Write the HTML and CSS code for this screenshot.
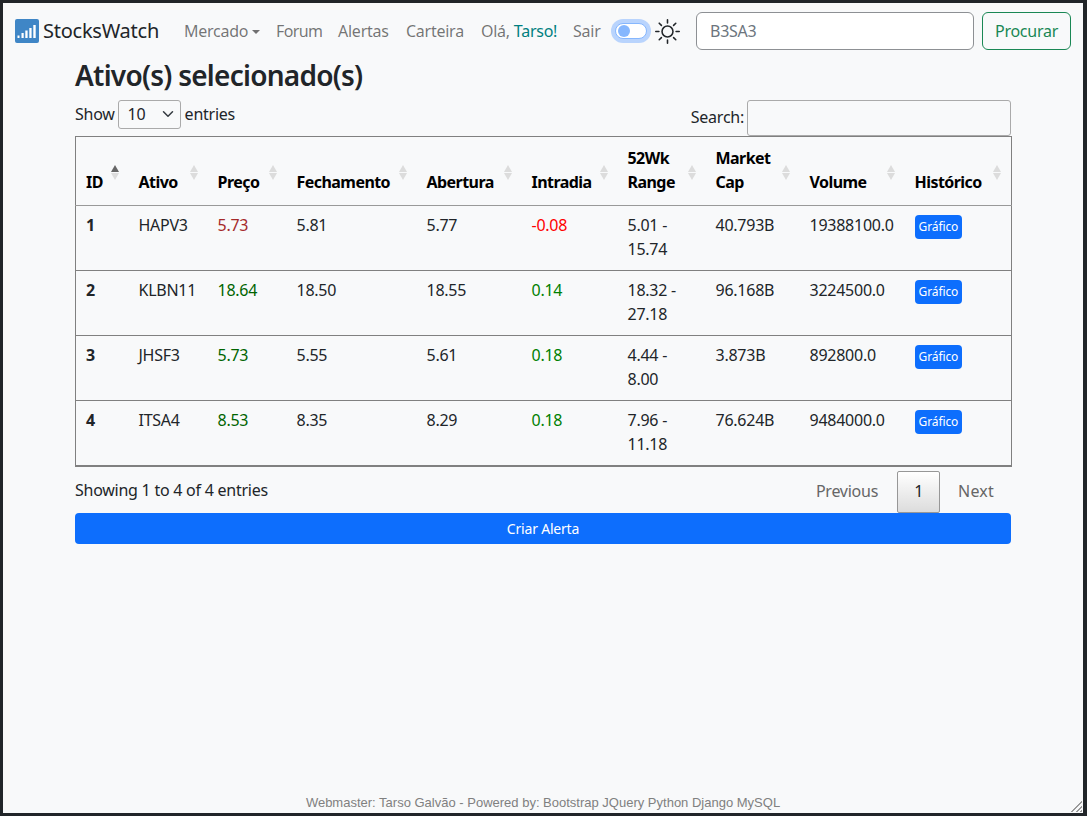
FILE: index.html
```html
<!DOCTYPE html>
<html lang="pt-BR">
<head>
<meta charset="utf-8">
<title>StocksWatch</title>
<link rel="stylesheet" href="styles.css">
</head>
<body>
<div class="frame">
  <nav class="navbar">
    <a class="brand" href="#">
      <svg class="logo" viewBox="0 0 24 24" width="24" height="24"><rect width="24" height="24" rx="2" fill="#3f86c6"/><g fill="#fff"><rect x="2.5" y="16.5" width="2" height="2.5"/><rect x="6.5" y="14" width="2.2" height="5"/><rect x="10.3" y="11.5" width="2.3" height="7.5"/><rect x="14.3" y="9" width="2.3" height="10"/><rect x="18.3" y="6" width="2.4" height="13"/></g></svg>
      <span>StocksWatch</span>
    </a>
    <ul class="nav">
      <li class="nav-link nav-mercado">Mercado<i class="caret"></i></li>
      <li class="nav-link nav-forum">Forum</li>
      <li class="nav-link nav-alertas">Alertas</li>
      <li class="nav-link nav-carteira">Carteira</li>
      <li class="nav-link nav-ola">Olá, <span class="user">Tarso!</span></li>
      <li class="nav-link nav-sair">Sair</li>
    </ul>
    <span class="switch"><i class="knob"></i></span>
    <svg class="sun" viewBox="0 0 16 16" width="25" height="25" fill="#212529"><path d="M8 11a3 3 0 1 1 0-6 3 3 0 0 1 0 6m0 1a4 4 0 1 0 0-8 4 4 0 0 0 0 8M8 0a.5.5 0 0 1 .5.5v2a.5.5 0 0 1-1 0v-2A.5.5 0 0 1 8 0m0 13a.5.5 0 0 1 .5.5v2a.5.5 0 0 1-1 0v-2A.5.5 0 0 1 8 13m8-5a.5.5 0 0 1-.5.5h-2a.5.5 0 0 1 0-1h2a.5.5 0 0 1 .5.5M3 8a.5.5 0 0 1-.5.5h-2a.5.5 0 0 1 0-1h2A.5.5 0 0 1 3 8m10.657-5.657a.5.5 0 0 1 0 .707l-1.414 1.415a.5.5 0 1 1-.707-.708l1.414-1.414a.5.5 0 0 1 .707 0m-9.193 9.193a.5.5 0 0 1 0 .707L3.05 13.657a.5.5 0 0 1-.707-.707l1.414-1.414a.5.5 0 0 1 .707 0m9.193 2.121a.5.5 0 0 1-.707 0l-1.414-1.414a.5.5 0 0 1 .707-.707l1.414 1.414a.5.5 0 0 1 0 .707M4.464 4.465a.5.5 0 0 1-.707 0L2.343 3.05a.5.5 0 1 1 .707-.707l1.414 1.414a.5.5 0 0 1 0 .708"/></svg>
    <form class="search-form">
      <input class="search-input" type="text" placeholder="B3SA3">
      <button class="search-btn" type="button">Procurar</button>
    </form>
  </nav>
  <main class="container">
    <h3 class="title">Ativo(s) selecionado(s)</h3>
    <div class="controls">
      <label class="length">Show <span class="select">10<svg viewBox="0 0 16 16" width="12" height="12"><path d="M2 5l6 6 6-6" fill="none" stroke="#343a40" stroke-width="2" stroke-linecap="round" stroke-linejoin="round"/></svg></span> entries</label>
      <label class="filter"><span class="filter-label">Search:</span> <input class="filter-input" type="search"></label>
    </div>
    <table class="grid">
      <colgroup>
        <col class="c-id"><col class="c-ativo"><col class="c-preco"><col class="c-fech"><col class="c-abert"><col class="c-intra"><col class="c-range"><col class="c-cap"><col class="c-vol"><col class="c-hist">
      </colgroup>
      <thead>
        <tr>
          <th class="sort sort-asc">ID</th>
          <th class="sort">Ativo</th>
          <th class="sort">Preço</th>
          <th class="sort">Fechamento</th>
          <th class="sort">Abertura</th>
          <th class="sort">Intradia</th>
          <th class="sort">52Wk Range</th>
          <th class="sort">Market Cap</th>
          <th class="sort">Volume</th>
          <th class="sort">Histórico</th>
        </tr>
      </thead>
      <tbody>
        <tr>
          <td class="bold">1</td><td>HAPV3</td><td class="price-down">5.73</td><td>5.81</td><td>5.77</td><td class="change-down">-0.08</td><td>5.01 - 15.74</td><td>40.793B</td><td>19388100.0</td><td><a class="badge" href="#">Gráfico</a></td>
        </tr>
        <tr>
          <td class="bold">2</td><td>KLBN11</td><td class="price-up">18.64</td><td>18.50</td><td>18.55</td><td class="change-up">0.14</td><td>18.32 - 27.18</td><td>96.168B</td><td>3224500.0</td><td><a class="badge" href="#">Gráfico</a></td>
        </tr>
        <tr>
          <td class="bold">3</td><td>JHSF3</td><td class="price-up">5.73</td><td>5.55</td><td>5.61</td><td class="change-up">0.18</td><td>4.44 - 8.00</td><td>3.873B</td><td>892800.0</td><td><a class="badge" href="#">Gráfico</a></td>
        </tr>
        <tr>
          <td class="bold">4</td><td>ITSA4</td><td class="price-up">8.53</td><td>8.35</td><td>8.29</td><td class="change-up">0.18</td><td>7.96 - 11.18</td><td>76.624B</td><td>9484000.0</td><td><a class="badge" href="#">Gráfico</a></td>
        </tr>
      </tbody>
    </table>
    <div class="table-foot">
      <span class="info">Showing 1 to 4 of 4 entries</span>
      <div class="pager">
        <span class="page-link page-prev">Previous</span>
        <span class="page-current">1</span>
        <span class="page-link page-next">Next</span>
      </div>
    </div>
    <button class="alert-btn" type="button">Criar Alerta</button>
  </main>
  <footer class="footer">Webmaster: Tarso Galvão - Powered by: Bootstrap JQuery Python Django MySQL</footer>
</div>
</body>
</html>
```
FILE: styles.css
```css
* { box-sizing: border-box; }
html, body { margin: 0; height: 100%; }
body {
  font-family: "Noto Sans", "Open Sans", sans-serif;
  font-size: 16px;
  line-height: 24px;
  letter-spacing: -0.25px;
  color: #212529;
  background: #212529;
}
.frame {
  position: relative;
  height: 100%;
  border: 3px solid #212529;
  border-right-width: 4px;
  background: #f8f9fa;
  display: flex;
  flex-direction: column;
  overflow: hidden;
}
.frame::after {
  content: "";
  position: absolute;
  right: 1px;
  bottom: 1px;
  width: 13px;
  height: 13px;
  background: repeating-linear-gradient(135deg, transparent 0 1.5px, #9a9a9a 1.5px 3px);
  clip-path: polygon(100% 0, 100% 100%, 0 100%);
}
.navbar {
  display: flex;
  align-items: center;
  height: 56px;
  padding: 0 12px;
  flex: none;
}
.brand {
  display: flex;
  align-items: center;
  gap: 4px;
  color: #212529;
  text-decoration: none;
  font-size: 20px;
  width: 169px;
  flex: none;
}
.logo { flex: none; }
.nav {
  display: flex;
  list-style: none;
  margin: 0;
  padding: 0;
  width: 427px;
  flex: none;
}
.nav-link {
  color: rgba(0, 0, 0, 0.55);
  white-space: nowrap;
}
.nav-mercado { width: 92px; }
.nav-forum { width: 62px; letter-spacing: -0.6px; }
.nav-alertas { width: 68px; }
.nav-carteira { width: 75px; }
.nav-ola { width: 92px; }
.user { color: #008080; }
.caret {
  display: inline-block;
  margin-left: 4px;
  vertical-align: 3px;
  border-top: 4.8px solid;
  border-left: 4.8px solid transparent;
  border-right: 4.8px solid transparent;
}
.switch {
  flex: none;
  display: flex;
  align-items: center;
  width: 32px;
  height: 16px;
  margin: 0 8px 0 4px;
  padding: 2px;
  border: 1px solid #86b7fe;
  border-radius: 8px;
  background: #fff;
  box-shadow: 0 0 0 4px #b9d4fd;
}
.knob {
  display: block;
  width: 12px;
  height: 12px;
  border-radius: 50%;
  background: #86b7fe;
}
.sun { flex: none; }
.search-form {
  display: flex;
  gap: 8px;
  margin-left: 16px;
}
.search-input {
  width: 278px;
  height: 38px;
  padding: 6px 13px;
  border: 1px solid #8d9094;
  border-radius: 6px;
  background: #fff;
  font: inherit;
  letter-spacing: inherit;
}
.search-input::placeholder { color: #6c757d; opacity: 1; }
.search-btn {
  width: 89px;
  height: 38px;
  padding: 0;
  border: 1px solid #198754;
  border-radius: 6px;
  background: transparent;
  color: #198754;
  font: inherit;
  letter-spacing: inherit;
}
.container {
  width: 936px;
  margin: 0 0 0 72px;
  flex: none;
}
.title {
  margin: 0 0 8px;
  height: 33px;
  font-size: 28px;
  line-height: 32px;
  font-weight: 600;
  letter-spacing: -0.75px;
}
.controls {
  display: flex;
  justify-content: space-between;
  align-items: flex-start;
  height: 36px;
}
.length {
  display: flex;
  align-items: center;
  gap: 3px;
  height: 28px;
}
.select {
  display: flex;
  align-items: center;
  justify-content: space-between;
  width: 63px;
  height: 29px;
  flex: none;
  padding: 0 6px 0 9px;
  border: 1px solid #aaa;
  border-radius: 3px;
  margin-right: 1px;
}
.filter {
  display: flex;
  align-items: center;
  gap: 3px;
}
.filter-label { margin-bottom: 2px; }
.filter-input {
  width: 264px;
  height: 36px;
  padding: 5px;
  border: 1px solid #aaa;
  border-radius: 3px;
  background: transparent;
}
.grid {
  width: 936px;
  table-layout: fixed;
  border-collapse: collapse;
  border: 1px solid #808080;
  border-bottom-width: 2px;
}
.c-id { width: 53px; }
.c-ativo, .c-preco { width: 79px; }
.c-fech { width: 130px; }
.c-abert { width: 105px; }
.c-intra { width: 96px; }
.c-range { width: 88px; }
.c-cap { width: 94px; }
.c-vol { width: 105px; }
.c-hist { width: 107px; }
.grid th {
  height: 69px;
  padding: 8px 18px 11px 10px;
  text-align: left;
  vertical-align: bottom;
  font-weight: 700;
  letter-spacing: -0.55px;
  color: #000;
  border-bottom: 1px solid #999;
}
.grid td {
  height: 65px;
  padding: 7px 10px 9px;
  vertical-align: top;
  border-top: 1px solid #999;
}
.grid tbody tr + tr td { border-top-color: #808080; }
.sort { position: relative; }
.sort::before, .sort::after {
  content: "";
  position: absolute;
  right: 10px;
  width: 0;
  height: 0;
  border-left: 4px solid transparent;
  border-right: 4px solid transparent;
}
.sort::before { top: 28px; border-bottom: 7px solid #dcdcdc; }
.sort::after { top: 36px; border-top: 7px solid #dcdcdc; }
.sort-asc::before { border-bottom-color: #666; }
.bold { font-weight: 700; }
.price-down { color: #a52a2a; }
.price-up { color: #006400; }
.change-down { color: #f00; }
.change-up { color: #008000; }
.badge {
  display: inline-block;
  padding: 4px;
  margin-top: 2px;
  border-radius: 4px;
  background: #0d6efd;
  color: #fff;
  font-size: 12px;
  line-height: 16px;
  letter-spacing: -0.1px;
  text-decoration: none;
}
.table-foot {
  display: flex;
  justify-content: space-between;
  height: 46px;
  padding-top: 4px;
}
.info { padding-top: 7px; }
.pager { display: flex; align-items: flex-start; padding-right: 1px; }
.page-link { padding: 8px 16px; height: 42px; color: #666; }
.page-prev { padding-right: 19px; }
.page-next { padding-left: 18px; letter-spacing: 0.2px; }
.page-current {
  width: 43px;
  height: 42px;
  padding-top: 7px;
  text-align: center;
  border: 1px solid #979797;
  border-radius: 2px;
  background: linear-gradient(#fff, #dcdcdc);
}
.alert-btn {
  display: block;
  width: 936px;
  height: 31px;
  border: 0;
  border-radius: 4px;
  background: #0d6efd;
  color: #fff;
  font: inherit;
  font-size: 14px;
  letter-spacing: -0.2px;
}
.footer {
  margin-top: auto;
  text-align: center;
  font-family: "Liberation Sans", Arial, sans-serif;
  font-size: 13px;
  line-height: 15px;
  letter-spacing: 0;
  color: #808080;
  padding-bottom: 3px;
}
```
